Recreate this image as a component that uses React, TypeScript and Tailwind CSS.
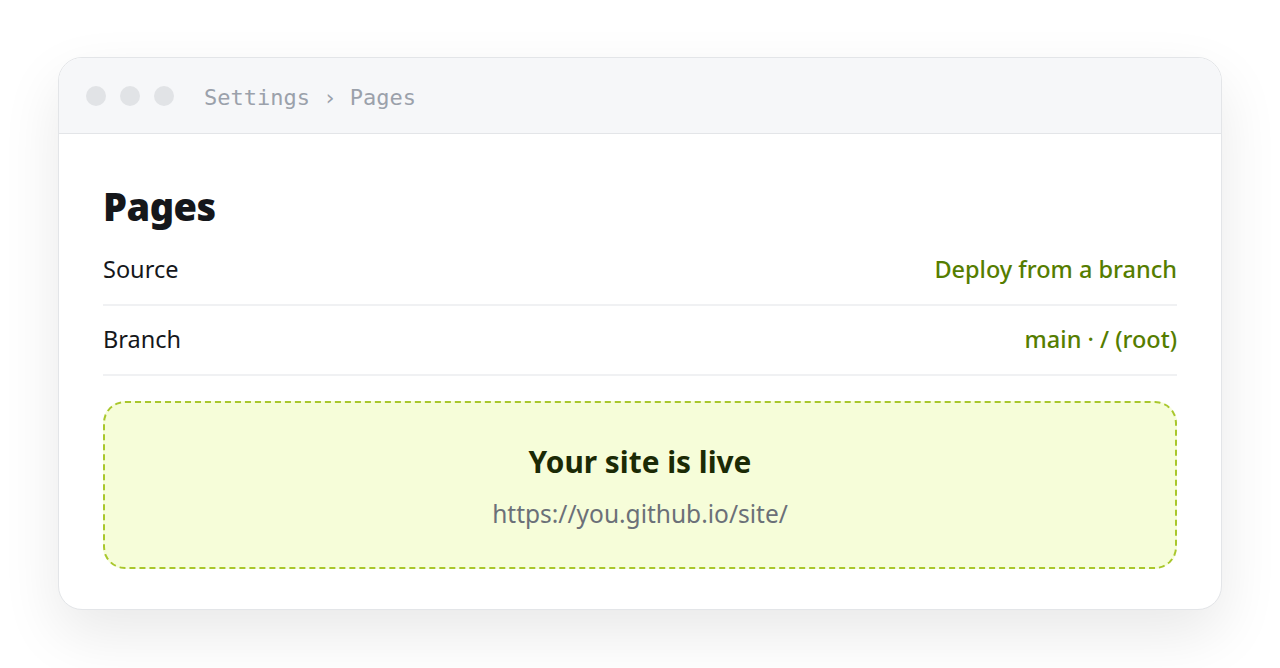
import React from "react";

export default function App() {
  return (
    <div className="min-h-[668px] w-[1280px] bg-white pt-[57px] px-[58px]" style={{ fontFamily: '"Noto Sans", "Open Sans", sans-serif' }}>
      <div className="overflow-hidden rounded-[24px] border border-[#e3e5e8] bg-white shadow-[0_24px_60px_rgba(0,0,0,0.09)]">
        <div className="flex h-[76px] items-center border-b border-[#e3e5e8] bg-[#f6f7f9] pl-[27px]">
          <div className="flex gap-[14px]">
            <span className="h-[20px] w-[20px] rounded-full bg-[#e1e3e6]" />
            <span className="h-[20px] w-[20px] rounded-full bg-[#e1e3e6]" />
            <span className="h-[20px] w-[20px] rounded-full bg-[#e1e3e6]" />
          </div>
          <span className="ml-[30px] pt-[3px] text-[22px] text-[#9ba1ab]" style={{ fontFamily: '"DejaVu Sans Mono", "Liberation Mono", monospace' }}>
            Settings › Pages
          </span>
        </div>
        <div className="px-[44px] pt-[42px] pb-[40px]">
          <h1 className="text-[38px] font-black leading-[60px] tracking-[-0.5px] text-[#15171b]">Pages</h1>
          <div className="flex h-[70px] items-center justify-between border-b-2 border-[#f0f1f3] text-[23.5px]">
            <span className="text-[#15171b]">Source</span>
            <span className="font-medium text-[#557d00]">Deploy from a branch</span>
          </div>
          <div className="flex h-[70px] items-center justify-between border-b-2 border-[#f0f1f3] text-[23.5px]">
            <span className="text-[#15171b]">Branch</span>
            <span className="font-medium text-[#557d00]">main · / (root)</span>
          </div>
          <div className="mt-[25px] flex h-[168px] flex-col items-center justify-center rounded-[22px] border-2 border-dashed border-[#a9c72c] bg-[#f6fdd9]">
            <div className="text-[29.8px] font-bold leading-[40px] text-[#1b2a05]">Your site is live</div>
            <div className="mt-[17px] text-[24.5px] leading-[30px] text-[#6b7078]">https://you.github.io/site/</div>
          </div>
        </div>
      </div>
    </div>
  );
}
